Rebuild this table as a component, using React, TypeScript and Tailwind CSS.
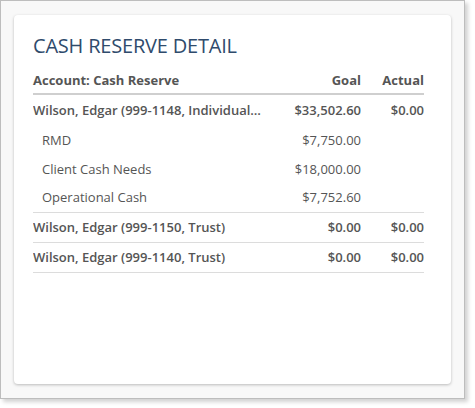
import React from 'react';

type Row = { name: string; goal: string; actual?: string; sub?: boolean; border?: boolean; h: string };

const rows: Row[] = [
  { name: 'Wilson, Edgar (999-1148, Individual Retirement)', goal: '$33,502.60', actual: '$0.00', h: 'h-[31px]' },
  { name: 'RMD', goal: '$7,750.00', sub: true, h: 'h-[29px]' },
  { name: 'Client Cash Needs', goal: '$18,000.00', sub: true, h: 'h-[29px]' },
  { name: 'Operational Cash', goal: '$7,752.60', sub: true, border: true, h: 'h-[29px]' },
  { name: 'Wilson, Edgar (999-1150, Trust)', goal: '$0.00', actual: '$0.00', border: true, h: 'h-[30px]' },
  { name: 'Wilson, Edgar (999-1140, Trust)', goal: '$0.00', actual: '$0.00', border: true, h: 'h-[30px]' },
];

export default function App() {
  return (
    <div className="w-[475px] h-[408px] bg-white" style={{ fontFamily: '"Open Sans", "Noto Sans", sans-serif' }}>
      <div className="w-[465px] h-[399px] bg-[#f8f8f8] border border-[#bdbdbd] shadow-[3px_3px_4px_rgba(0,0,0,0.18)] pt-[14px] pl-[13px] pr-[13px]">
        <div className="h-[369px] bg-white rounded-[4px] shadow-[0_1px_3px_rgba(0,0,0,0.25)] px-[19px] pt-[17px]">
          <h1 className="text-[20px] leading-[28px] text-[#2f4b6c] tracking-[-0.2px]">CASH RESERVE DETAIL</h1>
          <div className="mt-[11px] w-[391px] text-[13px] text-[#555]">
            <div className="flex items-end h-[24px] border-b-2 border-[#cfcfcf] font-bold pb-[4px] leading-[18px]">
              <div className="flex-1">Account: Cash Reserve</div>
              <div className="w-[100px] text-right">Goal</div>
              <div className="w-[63px] text-right">Actual</div>
            </div>
            {rows.map((r, i) => (
              <div
                key={i}
                className={`flex items-center ${r.h} ${r.sub ? 'font-normal' : 'font-semibold'} ${r.border ? 'border-b border-[#dcdcdc]' : ''}`}
              >
                <div className={`flex-1 min-w-0 truncate pr-[12px] ${r.sub ? 'pl-[9px]' : ''}`}>{r.name}</div>
                <div className="w-[88px] text-right shrink-0">{r.goal}</div>
                <div className="w-[63px] text-right shrink-0">{r.actual ?? ''}</div>
              </div>
            ))}
          </div>
        </div>
      </div>
    </div>
  );
}
